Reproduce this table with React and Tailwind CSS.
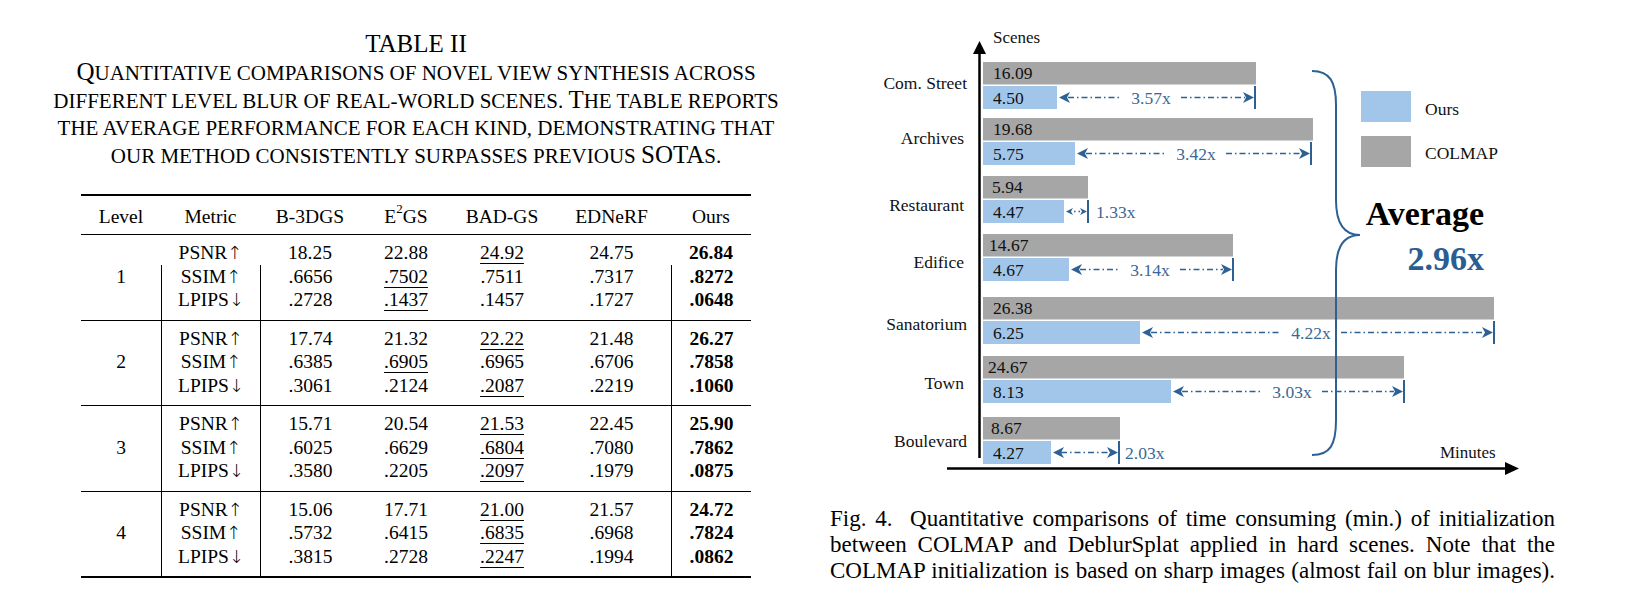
import React from 'react';

const cols = ['w-[80px]', 'w-[99px]', 'w-[100px]', 'w-[92px]', 'w-[100px]', 'w-[119px]', 'w-[80px]'];
const ruled = [false, true, true, false, false, false, true];

const groups = [
  {
    level: '1',
    rows: [
      ['PSNR↑', '18.25', '22.88', '_24.92', '24.75', '26.84'],
      ['SSIM↑', '.6656', '_.7502', '.7511', '.7317', '.8272'],
      ['LPIPS↓', '.2728', '_.1437', '.1457', '.1727', '.0648'],
    ],
  },
  {
    level: '2',
    rows: [
      ['PSNR↑', '17.74', '21.32', '_22.22', '21.48', '26.27'],
      ['SSIM↑', '.6385', '_.6905', '.6965', '.6706', '.7858'],
      ['LPIPS↓', '.3061', '.2124', '_.2087', '.2219', '.1060'],
    ],
  },
  {
    level: '3',
    rows: [
      ['PSNR↑', '15.71', '20.54', '_21.53', '22.45', '25.90'],
      ['SSIM↑', '.6025', '.6629', '_.6804', '.7080', '.7862'],
      ['LPIPS↓', '.3580', '.2205', '_.2097', '.1979', '.0875'],
    ],
  },
  {
    level: '4',
    rows: [
      ['PSNR↑', '15.06', '17.71', '_21.00', '21.57', '24.72'],
      ['SSIM↑', '.5732', '.6415', '_.6835', '.6968', '.7824'],
      ['LPIPS↓', '.3815', '.2728', '_.2247', '.1994', '.0862'],
    ],
  },
];

// metric names end in an arrow; draw the arrow in DejaVu so it is full height
function Metric({ text }) {
  const arrow = text.slice(-1);
  return (
    <>
      {text.slice(0, -1)}
      <span className="font-['DejaVu_Sans',sans-serif] text-[18px] font-light">{arrow}</span>
    </>
  );
}

// one row of the table, 7 cells; `lines` toggles the vertical rules
function Row({ cells, lines, h, bold = true }) {
  return (
    <div className={`flex ${h}`}>
      {cols.map((w, i) => {
        let v = cells ? cells[i] : '';
        const under = typeof v === 'string' && v.startsWith('_');
        if (under) v = v.slice(1);
        if (i === 1 && typeof v === 'string' && /[↑↓]$/.test(v)) v = <Metric text={v} />;
        return (
          <div
            key={i}
            className={`${w} flex items-center justify-center ${lines && ruled[i] ? 'border-l border-black' : ''} ${
              i === 6 && bold ? 'font-bold' : ''
            }`}
          >
            <span className={under ? 'underline decoration-1 underline-offset-[4px]' : ''}>{v}</span>
          </div>
        );
      })}
    </div>
  );
}

function Sc({ children }) {
  return <span className="uppercase text-[21px]">{children}</span>;
}

function TablePanel() {
  return (
    <div className="w-[828px] pl-[4px] pt-[30px] flex flex-col items-center text-black">
      <div className="text-[25px] leading-[27px]">TABLE II</div>
      <div className="mt-[2px] text-[25px] leading-[26.6px] text-center">
        <div>
          Q<Sc>uantitative comparisons of novel view synthesis across</Sc>
        </div>
        <div>
          <Sc>different level blur of real-world scenes. </Sc>T<Sc>he table reports</Sc>
        </div>
        <div>
          <Sc>the average performance for each kind, demonstrating that</Sc>
        </div>
        <div>
          <Sc>our method consistently surpasses previous </Sc>SOTA<Sc>s.</Sc>
        </div>
      </div>

      <div className="mt-[25px] w-[670px] border-t-2 border-b-2 border-black text-[19.5px] leading-none">
        <Row
          h="h-[39px] pt-[3px] border-b-[1.5px] border-black"
          bold={false}
          cells={[
            'Level',
            'Metric',
            'B-3DGS',
            <span key="e">
              E<sup className="text-[13px] align-[4px]">2</sup>GS
            </span>,
            'BAD-GS',
            'EDNeRF',
            'Ours',
          ]}
        />
        {groups.map((g, gi) => (
          <div key={g.level} className={gi < 3 ? 'border-b-[1.5px] border-black' : ''}>
            <Row h="h-[6px]" lines={gi > 0} />
            {g.rows.map((r, ri) => (
              <Row
                key={ri}
                h="h-[23.5px]"
                lines={gi > 0 || ri > 0}
                cells={[ri === 1 ? g.level : '', ...r]}
              />
            ))}
            <Row h="h-[8px]" lines />
          </div>
        ))}
      </div>
    </div>
  );
}

const scenes = [
  { name: 'Com. Street', ly: 83, gy: 62, gEnd: 1256, bEnd: 1057, tick: 1255, col: '16.09', ours: '4.50', gx: 993, ratio: '3.57x', rx: 1151 },
  { name: 'Archives', ly: 138, gy: 118, gEnd: 1313, bEnd: 1075, tick: 1311, col: '19.68', ours: '5.75', gx: 993, ratio: '3.42x', rx: 1196 },
  { name: 'Restaurant', ly: 205, gy: 176, gEnd: 1088, bEnd: 1064, tick: 1088, col: '5.94', ours: '4.47', gx: 992, ratio: '1.33x', side: 1096 },
  { name: 'Edifice', ly: 262, gy: 234, gEnd: 1233, bEnd: 1069, tick: 1233, col: '14.67', ours: '4.67', gx: 989, ratio: '3.14x', rx: 1150 },
  { name: 'Sanatorium', ly: 324, gy: 297, gEnd: 1494, bEnd: 1140, tick: 1494, col: '26.38', ours: '6.25', gx: 993, ratio: '4.22x', rx: 1311 },
  { name: 'Town', ly: 383, gy: 356, gEnd: 1404, bEnd: 1171, tick: 1404, col: '24.67', ours: '8.13', gx: 988, ratio: '3.03x', rx: 1292 },
  { name: 'Boulevard', ly: 441, gy: 417, gEnd: 1120, bEnd: 1051, tick: 1119, col: '8.67', ours: '4.27', gx: 991, ratio: '2.03x', side: 1125 },
];

const ARROW = '#2d6194';
const BLUE = '#a2c6ea';
const GRAY = '#a6a6a6';

function Annotation({ s }) {
  const by = s.gy + 24;
  const cy = by + 11.5;
  const a = s.bEnd + 2;
  const b = s.tick - 1;
  const short = b - a < 40;
  const L = short ? 7 : 11;
  const W = short ? 3.5 : 5.5;
  const N = short ? 5 : 8;
  const dash = '6 3 1.5 3';
  const left = `${a},${cy} ${a + L},${cy - W} ${a + N},${cy} ${a + L},${cy + W}`;
  const right = `${b},${cy} ${b - L},${cy - W} ${b - N},${cy} ${b - L},${cy + W}`;
  return (
    <g>
      <line x1={s.tick} y1={by} x2={s.tick} y2={by + 23} stroke={ARROW} strokeWidth="2" />
      {s.rx ? (
        <>
          <line x1={a + 9} y1={cy} x2={s.rx - 30} y2={cy} stroke={ARROW} strokeWidth="1.5" strokeDasharray={dash} />
          <line x1={s.rx + 30} y1={cy} x2={b - 9} y2={cy} stroke={ARROW} strokeWidth="1.5" strokeDasharray={dash} />
          <text x={s.rx} y={cy + 6} textAnchor="middle" fontSize="17.5" fill="#3a6794">
            {s.ratio}
          </text>
        </>
      ) : (
        <>
          <line
            x1={a + N}
            y1={cy}
            x2={b - N}
            y2={cy}
            stroke={ARROW}
            strokeWidth="1.5"
            strokeDasharray={short ? '1.5 3' : dash}
            strokeDashoffset={short ? -3 : 0}
          />
          <text x={s.side} y={cy + 6} fontSize="17.5" fill="#3a6794">
            {s.ratio}
          </text>
        </>
      )}
      <polygon points={left} fill={ARROW} />
      <polygon points={right} fill={ARROW} />
    </g>
  );
}

function Chart() {
  return (
    <svg width="808" height="506" viewBox="828 0 808 506" fontFamily="'Liberation Serif', serif">
      {/* axes */}
      <line x1="979.5" y1="52" x2="979.5" y2="458" stroke="#000" strokeWidth="2.5" />
      <polygon points="979.5,41 973,54 986,54" fill="#000" />
      <line x1="947" y1="468.5" x2="1507" y2="468.5" stroke="#000" strokeWidth="2.5" />
      <polygon points="1519,468.5 1505,462 1505,475" fill="#000" />
      <text x="993" y="43" fontSize="17" fill="#111">Scenes</text>
      <text x="1440" y="458" fontSize="17" fill="#111">Minutes</text>

      {scenes.map((s) => (
        <g key={s.name}>
          <text
            x={s.name === 'Com. Street' || s.name === 'Sanatorium' || s.name === 'Boulevard' ? 967 : 964}
            y={s.ly + 6}
            textAnchor="end"
            fontSize="17.5"
            fill="#111"
          >
            {s.name}
          </text>
          <rect x="983" y={s.gy} width={s.gEnd - 983} height="22.5" fill={GRAY} />
          <rect x="983" y={s.gy + 24} width={s.bEnd - 983} height="23" fill={BLUE} />
          <text x={s.gx} y={s.gy + 17} fontSize="17.5" fill="#111">
            {s.col}
          </text>
          <text x="993" y={s.gy + 41.5} fontSize="17.5" fill="#111">
            {s.ours}
          </text>
          <Annotation s={s} />
        </g>
      ))}

      {/* brace */}
      <path
        d="M1312,71 C1330,71 1336,82 1336,105 L1336,200 C1336,225 1345,235 1360,235 C1345,235 1336,245 1336,270 L1336,420 C1336,445 1330,455 1312,455"
        fill="none"
        stroke={ARROW}
        strokeWidth="2"
      />

      {/* legend */}
      <rect x="1361" y="91" width="50" height="31" fill={BLUE} />
      <rect x="1361" y="136" width="50" height="31" fill={GRAY} />
      <text x="1425" y="115" fontSize="17.5" fill="#111">
        Ours
      </text>
      <text x="1425" y="159" fontSize="17.5" fill="#111">
        COLMAP
      </text>

      <text x="1484" y="225" textAnchor="end" fontSize="34" fontWeight="bold" fill="#000">
        Average
      </text>
      <text x="1484" y="270" textAnchor="end" fontSize="34" fontWeight="bold" fill="#2b5d92">
        2.96x
      </text>
    </svg>
  );
}

function FigPanel() {
  const line = 'text-justify [text-align-last:justify]';
  return (
    <div className="w-[808px] flex flex-col">
      <Chart />
      <div className="pl-[2px] w-[727px] text-[23px] leading-[26px] text-black">
        <div className={line}>Fig. 4.&nbsp; Quantitative comparisons of time consuming (min.) of initialization</div>
        <div className={line}>between COLMAP and DeblurSplat applied in hard scenes. Note that the</div>
        <div className={line}>COLMAP initialization is based on sharp images (almost fail on blur images).</div>
      </div>
    </div>
  );
}

export default function App() {
  return (
    <div className="w-[1636px] h-[616px] bg-white flex font-['Liberation_Serif',serif] overflow-hidden">
      <TablePanel />
      <FigPanel />
    </div>
  );
}
